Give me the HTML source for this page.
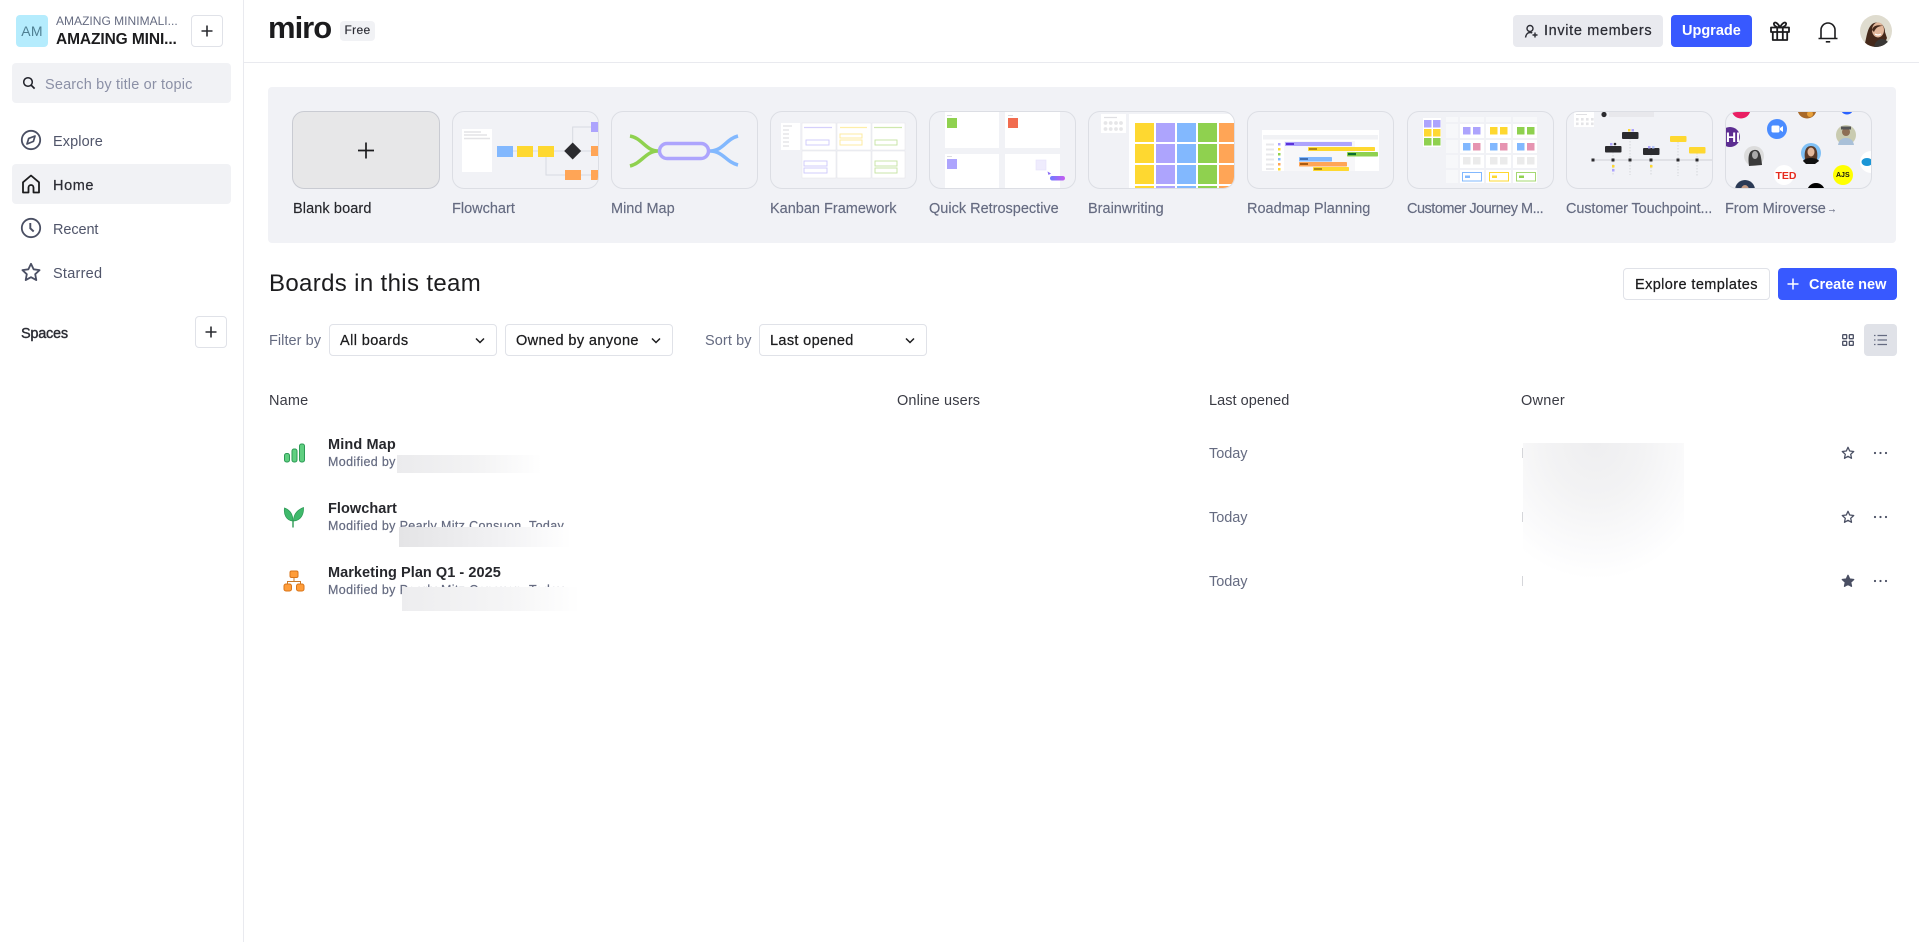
<!DOCTYPE html>
<html lang="en">
<head>
<meta charset="utf-8">
<title>Miro Boards</title>
<style>
*{box-sizing:border-box}
html,body{margin:0;padding:0;background:#fff}
body{width:1919px;height:942px;overflow:hidden;position:relative;font-family:"Liberation Sans",Arial,sans-serif;color:#1c1c1e;font-size:14.5px}
.a{position:absolute}
.t{position:absolute;white-space:nowrap;line-height:22px;height:20px}
.m{-webkit-text-stroke:.25px currentColor}
.g{color:#656b81}
.s{line-height:20px}
.btn{position:absolute;border:1px solid #e0e2e8;border-radius:4px;background:#fff}
.thumb{position:absolute;top:111px;width:147px;height:78px;border:1px solid #dcdee4;border-radius:12px;overflow:hidden;background:#f1f2f6}
.thumb svg{position:absolute;left:-1px;top:-1px;display:block}
.lab{position:absolute;top:198px;line-height:22px;white-space:nowrap;color:#656b81;font-size:14.5px;letter-spacing:0;-webkit-text-stroke:.15px currentColor}
svg{display:block}
</style>
</head>
<body>

<!-- Sidebar -->
<div class="a" style="left:243px;top:0;width:1px;height:942px;background:#e9eaef"></div>
<div class="a" style="left:16px;top:15px;width:32px;height:32px;border-radius:4px;background:#b5ecfd;color:#4f7f92;font-size:14px;line-height:33px;text-align:center;letter-spacing:.3px">AM</div>
<div class="t g s" style="left:56px;top:11px;font-size:12px;letter-spacing:.02px">AMAZING MINIMALI...</div>
<div class="t s" style="left:56px;top:30px;font-size:15.5px;font-weight:bold;letter-spacing:-.1px">AMAZING MINI...</div>
<div class="btn" style="left:191px;top:15px;width:32px;height:32px">
<svg width="30" height="30"><path d="M15 9.500v11M9.500 15h11" stroke="#2a2b30" stroke-width="1.600"/></svg></div>

<div class="a" style="left:12px;top:63px;width:219px;height:40px;background:#f1f2f5;border-radius:4px"></div>
<svg class="a" style="left:22px;top:76px" width="14" height="14" viewBox="0 0 14 14"><circle cx="6" cy="6" r="4.300" fill="none" stroke="#1f2028" stroke-width="1.500"/><path d="M9.200 9.200L12.600 12.600" stroke="#1f2028" stroke-width="1.700"/></svg>
<div class="t" style="left:45px;top:74px;color:#8b90a6;letter-spacing:.17px">Search by title or topic</div>

<svg class="a" style="left:20px;top:129px" width="22" height="22" viewBox="0 0 22 22"><circle cx="11" cy="11" r="9.200" fill="none" stroke="#4a4f63" stroke-width="1.800"/><path d="M15 7l-1.600 5.400L7 15l1.700-5.600z" fill="none" stroke="#4a4f63" stroke-width="1.700" stroke-linejoin="round"/></svg>
<div class="t g" style="left:53px;top:131px;color:#50556a;letter-spacing:.1px">Explore</div>

<div class="a" style="left:12px;top:164px;width:219px;height:40px;background:#f1f2f5;border-radius:4px"></div>
<svg class="a" style="left:20px;top:173px" width="22" height="22" viewBox="0 0 22 22"><path d="M3 19.500V9.300L11 2.500l8 6.800v10.200h-5.500v-5a2.500 2.500 0 0 0-5 0v5z" fill="none" stroke="#1c1c1e" stroke-width="1.800" stroke-linejoin="round"/></svg>
<div class="t m" style="left:53px;top:175px;letter-spacing:.6px;color:#2c2d35">Home</div>

<svg class="a" style="left:20px;top:217px" width="22" height="22" viewBox="0 0 22 22"><circle cx="11" cy="11" r="9.200" fill="none" stroke="#4a4f63" stroke-width="1.800"/><path d="M10.300 6v5.300l3.400 3.200" fill="none" stroke="#4a4f63" stroke-width="1.900"/></svg>
<div class="t" style="left:53px;top:219px;color:#50556a;letter-spacing:-.1px">Recent</div>

<svg class="a" style="left:20px;top:261px" width="22" height="22" viewBox="0 0 22 22"><path d="M11 2.800l2.600 5.500 6 .8-4.400 4.100 1.100 5.900L11 16.200l-5.300 2.900 1.100-5.900-4.400-4.100 6-.8z" fill="none" stroke="#4a4f63" stroke-width="1.800" stroke-linejoin="round"/></svg>
<div class="t" style="left:53px;top:263px;color:#50556a;letter-spacing:.25px">Starred</div>

<div class="t m" style="left:21px;top:323px;color:#2c2d35;letter-spacing:-.25px;-webkit-text-stroke:.4px currentColor">Spaces</div>
<div class="btn" style="left:195px;top:316px;width:32px;height:32px">
<svg width="30" height="30"><path d="M15 9.500v11M9.500 15h11" stroke="#2a2b30" stroke-width="1.600"/></svg></div>

<!-- Header -->
<div class="a" style="left:244px;top:62px;width:1675px;height:1px;background:#e9eaef"></div>
<div class="a" style="left:268px;top:9px;font-size:31px;line-height:38px;font-weight:bold;letter-spacing:-1px;color:#1c1c1e;height:38px;white-space:nowrap">miro</div>
<div class="a" style="left:340px;top:21px;width:35px;height:20px;background:#f1f2f5;border-radius:4px;font-size:12px;line-height:19px;text-align:center;letter-spacing:.35px;color:#2c2d35;-webkit-text-stroke:.15px currentColor">Free</div>

<div class="a" style="left:1513px;top:15px;width:150px;height:32px;background:#e9eaef;border-radius:4px"></div>
<svg class="a" style="left:1524px;top:24px" width="15" height="15" viewBox="0 0 15 15"><circle cx="6" cy="4.500" r="3" fill="none" stroke="#2c2d35" stroke-width="1.400"/><path d="M1.500 13.500c.4-3 2.200-5 4.700-5 .8 0 1.400.1 2 .5" fill="none" stroke="#2c2d35" stroke-width="1.400"/><path d="M11 8.500v5M8.500 11h5" stroke="#2c2d35" stroke-width="1.400"/></svg>
<div class="t m" style="left:1544px;top:20px;letter-spacing:.65px;color:#2c2d35">Invite members</div>
<div class="a" style="left:1671px;top:15px;width:81px;height:32px;background:#3859ff;border-radius:4px"></div>
<div class="t" style="left:1682px;top:20px;color:#fff;font-weight:bold;letter-spacing:0">Upgrade</div>

<svg class="a" style="left:1769px;top:20px" width="22" height="22" viewBox="0 0 22 22"><g fill="none" stroke="#1c1c1e" stroke-width="1.800" stroke-linejoin="round"><rect x="2" y="7.500" width="18" height="4.500"/><path d="M3.800 12v8h14.400v-8M8.200 7.500V20M13.800 7.500V20"/><path d="M11 7.500C9 3 5.800 1.500 5 3.200 4.300 5 7 7.500 11 7.500zM11 7.500C13 3 16.200 1.500 17 3.200 17.700 5 15 7.500 11 7.500z"/></g></svg>
<svg class="a" style="left:1817px;top:20px" width="22" height="24" viewBox="0 0 22 24"><path d="M1.500 18.500h19M4 18.500V10a7 7 0 0 1 14 0v8.500" fill="none" stroke="#1c1c1e" stroke-width="1.600"/><path d="M8.800 21.800h4.400" stroke="#1c1c1e" stroke-width="1.600"/></svg>
<svg class="a" style="left:1860px;top:15px" width="32" height="32" viewBox="0 0 32 32"><defs><clipPath id="av"><circle cx="16" cy="16" r="16"/></clipPath></defs><g clip-path="url(#av)"><rect width="32" height="32" fill="#dfdccf"/><path d="M4 32C7 22 7 11 14 8c7-2 11 3 11 9l2 6-4 9z" fill="#45291b"/><ellipse cx="18" cy="15" rx="6" ry="7.500" fill="#e2b79b"/><path d="M12 15c1-4 5-6 11-4-4 0-7 1-9 6z" fill="#45291b"/><path d="M15 19q3 2 6 0" stroke="#fff" stroke-width="1.200" fill="none"/><path d="M14 32c1-5 4-8 8-8s7 3 8 8z" fill="#3a3735"/></g></svg>

<!-- Templates panel -->
<div class="a" style="left:268px;top:87px;width:1628px;height:156px;background:#f1f2f6;border-radius:4px"></div>

<div class="a" style="left:292px;top:111px;width:148px;height:78px;background:#e7e7e8;border:1px solid #c9cbd2;border-radius:12px">
<svg width="146" height="76"><path d="M73 30.500v16M65 38.500h16" stroke="#1c1c1e" stroke-width="1.700"/></svg></div>
<div class="lab" style="left:293px;color:#26272c;letter-spacing:.1px">Blank board</div>

<!-- Flowchart -->
<div class="thumb" style="left:452px"><svg width="147" height="78">
<rect x="10" y="18" width="30" height="43" fill="#fff"/>
<path d="M12 21h17M12 24h23M12 27.500h26" stroke="#e3e3e6" stroke-width="1.600"/>
<path d="M61 40h78M94 46v18h19M129 64h10M120.700 32V16H139" stroke="#d8dae1" fill="none" stroke-width="1"/>
<rect x="45" y="35" width="16" height="11" fill="#82b8fe"/>
<rect x="65" y="35" width="16" height="11" fill="#fed830"/>
<rect x="86" y="35" width="16" height="11" fill="#fed830"/>
<path d="M120.700 31.500l8.500 8.500-8.500 8.500-8.500-8.500z" fill="#2b2b2f"/>
<rect x="139" y="11" width="10" height="10" fill="#ada4fd"/>
<rect x="139" y="35" width="10" height="10" fill="#ffa556"/>
<rect x="113" y="59" width="16" height="10" fill="#ffa556"/>
<rect x="139" y="59" width="10" height="10" fill="#ffa556"/>
</svg></div>
<div class="lab" style="left:452px">Flowchart</div>

<!-- Mind map -->
<div class="thumb" style="left:611px"><svg width="147" height="78">
<g fill="none" stroke-width="3.500">
<path d="M47 40C35 40 31 27 19 25M47 40C35 40 31 52 19 55" stroke="#8fd14f"/>
<path d="M99 40C112 40 115 28 127 25M99 40C112 40 115 51 127 54" stroke="#82b8fe"/>
<rect x="48.500" y="32.500" width="49" height="15" rx="7.500" stroke="#ada4fd"/>
</g></svg></div>
<div class="lab" style="left:611px">Mind Map</div>

<!-- Kanban -->
<div class="thumb" style="left:770px"><svg width="147" height="78">
<rect x="11" y="12" width="19" height="27" fill="#fff"/>
<path d="M13 15h9M13 19h6M13 23h6M13 27h6M13 31h6M13 35h6" stroke="#e6e6e9" stroke-width="1.500"/>
<g fill="#fff" stroke="#e6e7ec" stroke-width=".6">
<rect x="32" y="12" width="34" height="27"/><rect x="67" y="12" width="34" height="27"/><rect x="102" y="12" width="33" height="27"/>
<rect x="32" y="40" width="34" height="27"/><rect x="67" y="40" width="34" height="27"/><rect x="102" y="40" width="33" height="27"/></g>
<path d="M34 16.500h28" stroke="#d5d0fb" stroke-width="1.200"/><path d="M70 16.500h27" stroke="#fdeea8" stroke-width="1.200"/><path d="M104 16.500h28" stroke="#cfe8ae" stroke-width="1.200"/>
<g fill="none" stroke-width=".9">
<rect x="36" y="29" width="23" height="5" stroke="#cdc8fb"/>
<rect x="70" y="23" width="22" height="4" stroke="#fde99a"/><rect x="70" y="29" width="22" height="5" stroke="#fde99a"/>
<rect x="105" y="29" width="22" height="5" stroke="#c5e3a1"/>
<rect x="34" y="50" width="23" height="5" stroke="#cdc8fb"/><rect x="34" y="57" width="23" height="5" stroke="#cdc8fb"/>
<rect x="105" y="50" width="22" height="5" stroke="#c5e3a1"/><rect x="105" y="57" width="22" height="5" stroke="#c5e3a1"/>
</g></svg></div>
<div class="lab" style="left:770px">Kanban Framework</div>

<!-- Quick Retro -->
<div class="thumb" style="left:929px"><svg width="147" height="78">
<g fill="#fff"><rect x="16" y="0" width="54" height="37"/><rect x="76" y="0" width="55" height="37"/><rect x="16" y="43" width="54" height="36"/><rect x="76" y="43" width="55" height="36"/></g>
<rect x="18" y="7" width="10" height="10" fill="#8fd14f"/><rect x="79" y="7" width="10" height="10" fill="#f16c4f"/><rect x="18" y="48" width="10" height="10" fill="#ada4fd"/>
<path d="M18 4.500h5M79 4.500h5M18 45.500h5" stroke="#dcdce0" stroke-width="1"/>
<rect x="107" y="49" width="10" height="10" fill="#efecfd" stroke="#e4e0fb" stroke-width=".6"/>
<path d="M118.500 60.500l3.500 2-2.500 1.500z" fill="#8a6cf5"/>
<defs><linearGradient id="qg"><stop offset="0" stop-color="#6d7cff"/><stop offset="1" stop-color="#c65cf0"/></linearGradient></defs>
<rect x="121" y="65" width="15" height="4.500" rx="2.200" fill="url(#qg)"/>
</svg></div>
<div class="lab" style="left:929px">Quick Retrospective</div>

<!-- Brainwriting -->
<div class="thumb" style="left:1088px"><svg width="147" height="78">
<rect x="13" y="3" width="25" height="19" fill="#fff"/>
<path d="M16 6.500h13" stroke="#e0e0e3" stroke-width="1.200"/>
<g fill="#e6e6e8"><circle cx="17.500" cy="12" r="1.900"/><circle cx="22.700" cy="12" r="1.900"/><circle cx="28" cy="12" r="1.900"/><circle cx="33" cy="12" r="1.900"/><circle cx="17.500" cy="18" r="1.900"/><circle cx="22.700" cy="18" r="1.900"/><circle cx="28" cy="18" r="1.900"/><circle cx="33" cy="18" r="1.900"/></g>
<rect x="41" y="3" width="110" height="76" fill="#fff"/>
<g fill="#fed830"><rect x="47" y="12" width="19" height="19"/><rect x="47" y="33" width="19" height="19"/><rect x="47" y="54" width="19" height="19"/><rect x="47" y="75" width="19" height="6"/></g>
<g fill="#ada4fd"><rect x="68" y="12" width="19" height="19"/><rect x="68" y="33" width="19" height="19"/><rect x="68" y="54" width="19" height="19"/><rect x="68" y="75" width="19" height="6"/></g>
<g fill="#82b8fe"><rect x="89" y="12" width="19" height="19"/><rect x="89" y="33" width="19" height="19"/><rect x="89" y="54" width="19" height="19"/><rect x="89" y="75" width="19" height="6"/></g>
<g fill="#8fd14f"><rect x="110" y="12" width="19" height="19"/><rect x="110" y="33" width="19" height="19"/><rect x="110" y="54" width="19" height="19"/><rect x="110" y="75" width="19" height="6"/></g>
<g fill="#ffa556"><rect x="131" y="12" width="19" height="19"/><rect x="131" y="33" width="19" height="19"/><rect x="131" y="54" width="19" height="19"/><rect x="131" y="75" width="19" height="6"/></g>
</svg></div>
<div class="lab" style="left:1088px">Brainwriting</div>

<!-- Roadmap -->
<div class="thumb" style="left:1247px"><svg width="147" height="78">
<rect x="15" y="19" width="117" height="41" fill="#fff"/>
<rect x="16" y="24" width="115" height="4.500" fill="#f1f2f5"/>
<rect x="37" y="30" width="71" height="30" fill="#f7f7f9"/>
<g fill="#e8e8eb"><rect x="19" y="32.500" width="8" height="2"/><rect x="19" y="37.500" width="8" height="2"/><rect x="19" y="42.500" width="8" height="2"/><rect x="19" y="47.500" width="8" height="2"/><rect x="19" y="52.500" width="8" height="2"/><rect x="19" y="57" width="8" height="2"/></g>
<rect x="31" y="32" width="2.500" height="2.500" fill="#ada4fd"/><rect x="31" y="37" width="2.500" height="2.500" fill="#fed830"/><rect x="31" y="42" width="2.500" height="2.500" fill="#8fd14f"/><rect x="31" y="47" width="2.500" height="2.500" fill="#82b8fe"/><rect x="31" y="52" width="2.500" height="2.500" fill="#ffa556"/><rect x="31" y="57" width="2.500" height="2.500" fill="#fed830"/>
<rect x="38" y="31" width="67" height="4" rx=".8" fill="#ada4fd"/><rect x="39" y="32" width="8" height="2" fill="#5b30d8"/>
<rect x="61" y="36" width="67" height="4" rx=".8" fill="#fed830"/><rect x="62" y="37" width="8" height="2" fill="#b08a12"/>
<rect x="100" y="41" width="31" height="4.500" rx=".8" fill="#8fd14f"/><rect x="101" y="42" width="8" height="2.200" fill="#0b6f2c"/>
<rect x="52" y="46" width="33" height="4.500" rx=".8" fill="#82b8fe"/><rect x="53" y="47" width="8" height="2" fill="#3d6fb5"/>
<rect x="52" y="51" width="48" height="4.500" rx=".8" fill="#ffa556"/><rect x="53" y="52" width="8" height="2" fill="#a85a13"/>
<rect x="66" y="56" width="36" height="4" rx=".8" fill="#fed830"/><rect x="67" y="57" width="8" height="2" fill="#b08a12"/>
</svg></div>
<div class="lab" style="left:1247px">Roadmap Planning</div>

<!-- Customer Journey -->
<div class="thumb" style="left:1407px"><svg width="147" height="78">
<rect x="16" y="7" width="18" height="29" fill="#fff"/>
<g><rect x="17" y="9" width="7.500" height="7.500" fill="#ada4fd"/><rect x="26" y="9" width="7.500" height="7.500" fill="#ada4fd"/><rect x="17" y="18" width="7.500" height="7.500" fill="#fed830"/><rect x="26" y="18" width="7.500" height="7.500" fill="#fed830"/><rect x="17" y="27" width="7.500" height="7.500" fill="#8fd14f"/><rect x="26" y="27" width="7.500" height="7.500" fill="#8fd14f"/></g>
<g fill="#f7f8fa"><rect x="39" y="6" width="12" height="5"/><rect x="39" y="13" width="12" height="14"/><rect x="39" y="29" width="12" height="13"/><rect x="39" y="44" width="12" height="13"/><rect x="39" y="59" width="12" height="13"/><rect x="53" y="6" width="24" height="5"/><rect x="79" y="6" width="25" height="5"/><rect x="106" y="6" width="24" height="5"/></g>
<g fill="#fff"><rect x="53" y="13" width="24" height="14"/><rect x="79" y="13" width="25" height="14"/><rect x="106" y="13" width="24" height="14"/><rect x="53" y="29" width="24" height="13"/><rect x="79" y="29" width="25" height="13"/><rect x="106" y="29" width="24" height="13"/><rect x="53" y="44" width="24" height="13"/><rect x="79" y="44" width="25" height="13"/><rect x="106" y="44" width="24" height="13"/><rect x="53" y="59" width="24" height="13"/><rect x="79" y="59" width="25" height="13"/><rect x="106" y="59" width="24" height="13"/></g>
<rect x="56" y="16" width="7.500" height="7.500" fill="#ada4fd"/><rect x="66" y="16" width="7.500" height="7.500" fill="#ada4fd"/>
<rect x="83" y="16" width="7.500" height="7.500" fill="#fed830"/><rect x="93" y="16" width="7.500" height="7.500" fill="#fed830"/>
<rect x="110" y="16" width="7.500" height="7.500" fill="#8fd14f"/><rect x="120" y="16" width="7.500" height="7.500" fill="#8fd14f"/>
<rect x="56" y="32" width="7.500" height="7.500" fill="#82b8fe"/><rect x="66" y="32" width="7.500" height="7.500" fill="#e694b1"/>
<rect x="83" y="32" width="7.500" height="7.500" fill="#82b8fe"/><rect x="93" y="32" width="7.500" height="7.500" fill="#e694b1"/>
<rect x="110" y="32" width="7.500" height="7.500" fill="#82b8fe"/><rect x="120" y="32" width="7.500" height="7.500" fill="#e694b1"/>
<g fill="#ebebeb"><rect x="56" y="46" width="7.500" height="7.500"/><rect x="66" y="46" width="7.500" height="7.500"/><rect x="83" y="46" width="7.500" height="7.500"/><rect x="93" y="46" width="7.500" height="7.500"/><rect x="110" y="46" width="7.500" height="7.500"/><rect x="120" y="46" width="7.500" height="7.500"/></g>
<rect x="55.500" y="61.500" width="19" height="8.500" fill="none" stroke="#82b8fe"/><rect x="58" y="64.500" width="5" height="2.500" fill="#82b8fe"/>
<rect x="82.500" y="61.500" width="19" height="8.500" fill="none" stroke="#fed830"/><rect x="85" y="64.500" width="5" height="2.500" fill="#fed830"/>
<rect x="109.500" y="61.500" width="19" height="8.500" fill="none" stroke="#a5d872"/><rect x="112" y="64.500" width="5" height="2.500" fill="#8fd14f"/>
</svg></div>
<div class="lab" style="left:1407px;letter-spacing:-.5px">Customer Journey M...</div>

<!-- Touchpoint -->
<div class="thumb" style="left:1566px"><svg width="147" height="78">
<rect x="8" y="0" width="20" height="16" fill="#fff"/>
<path d="M10 3.500h11" stroke="#e0e0e3" stroke-width="1"/>
<g fill="#e4e4e7"><rect x="10" y="7" width="2.600" height="2.600"/><rect x="15" y="7" width="2.600" height="2.600"/><rect x="20" y="7" width="2.600" height="2.600"/><rect x="25" y="7" width="2.600" height="2.600"/><rect x="10" y="11.500" width="2.600" height="2.600"/><rect x="15" y="11.500" width="2.600" height="2.600"/><rect x="20" y="11.500" width="2.600" height="2.600"/><rect x="25" y="11.500" width="2.600" height="2.600"/></g>
<circle cx="38" cy="3.500" r="2.600" fill="#2b2b2f"/><rect x="43" y="1" width="45" height="5" fill="#e8e8ec"/>
<path d="M27 49h120" stroke="#cfd0d6" stroke-width="1"/>
<g stroke="#c8c9cf" stroke-width=".7" stroke-dasharray="1.500 1.500"><path d="M47 41v24M64 27v37M85 44v21M112 31v34M131 42v23"/></g>
<g fill="#2b2b2f"><rect x="25.500" y="47.500" width="3" height="3"/><rect x="45.500" y="47.500" width="3" height="3"/><rect x="62.500" y="47.500" width="3" height="3"/><rect x="83.500" y="47.500" width="3" height="3"/><rect x="110.500" y="47.500" width="3" height="3"/><rect x="129.500" y="47.500" width="3" height="3"/>
<rect x="39" y="35" width="16.500" height="6.500" rx="1"/><rect x="56" y="21" width="16.500" height="7" rx="1"/><rect x="77" y="37" width="16.500" height="7" rx="1"/><circle cx="49" cy="33" r="1.300"/></g>
<rect x="104" y="25" width="16.500" height="6" rx="1" fill="#fed830"/><rect x="123" y="36" width="16.500" height="6.500" rx="1" fill="#fed830"/>
<rect x="62" y="18" width="2.500" height="2.500" fill="#fed830"/><rect x="65.500" y="18" width="2.500" height="2.500" fill="#ada4fd"/>
<rect x="44" y="32" width="2.500" height="2.500" fill="#ada4fd"/>
<rect x="82" y="35" width="2.500" height="2.500" fill="#ada4fd"/><rect x="86" y="35" width="2.500" height="2.500" fill="#b8c8fd"/>
<rect x="46" y="54" width="2.500" height="2.500" fill="#fed830"/><rect x="46" y="58" width="2.500" height="2.500" fill="#ada4fd"/><rect x="84" y="54" width="2.500" height="2.500" fill="#fed830"/>
</svg></div>
<div class="lab" style="left:1566px;letter-spacing:-.12px">Customer Touchpoint...</div>

<!-- Miroverse -->
<div class="thumb" style="left:1725px"><svg width="147" height="78">
<circle cx="16" cy="-2" r="9.500" fill="#e91e63"/>
<circle cx="82" cy="-2" r="9.500" fill="#a8692a"/><circle cx="85" cy="3" r="3" fill="#e8a13a"/>
<circle cx="122" cy="-3" r="6.500" fill="#2962ff"/>
<circle cx="52" cy="18" r="10" fill="#4a8cff"/><rect x="46.500" y="14.500" width="8" height="7" rx="1.500" fill="#fff"/><path d="M55 17l3-2v6l-3-2z" fill="#fff"/>
<circle cx="5" cy="26" r="10" fill="#5c2d91"/><text x="1" y="31" font-size="14" font-weight="bold" fill="#fff" font-family="Liberation Sans, sans-serif">HI</text>
<circle cx="121" cy="24" r="10" fill="#c9cbb0"/><circle cx="121" cy="21" r="4" fill="#8d6f55"/><rect x="116" y="15.500" width="10" height="3" fill="#555"/><path d="M113 34c1-6 5-7 8-7s7 1 8 7z" fill="#a9c0d8"/>
<circle cx="29" cy="45" r="10" fill="#dcdcdc"/><path d="M24 55c-1-8-1-15 5-16s7 5 8 15z" fill="#3a3a3a"/><ellipse cx="30" cy="44" rx="3" ry="4" fill="#a9a9a9"/>
<circle cx="86" cy="42" r="10" fill="#7fc0f5"/><path d="M80 48c-1-6 0-13 6-13s7 7 6 13z" fill="#5a3a28"/><ellipse cx="86" cy="41" rx="3.500" ry="4.500" fill="#e3b79a"/><path d="M78 50c2-4 14-4 16 0l-4 3h-9z" fill="#111"/>
<circle cx="59" cy="64" r="10" fill="#fff"/><text x="50.500" y="68" font-size="10.500" font-weight="bold" fill="#e62b1e" font-family="Liberation Sans, sans-serif">TED</text>
<circle cx="118" cy="64" r="10" fill="#ffff00"/><text x="111" y="66" font-size="7" font-weight="bold" fill="#111" font-family="Liberation Sans, sans-serif">AJS</text>
<circle cx="146" cy="51" r="11" fill="#fff"/><ellipse cx="142" cy="51" rx="5.500" ry="4" fill="#1b96d6"/>
<circle cx="20" cy="79" r="10" fill="#2b3a55"/><ellipse cx="20" cy="79" rx="4" ry="5" fill="#c49a82"/>
<circle cx="91" cy="81" r="9" fill="#000"/>
</svg></div>
<div class="lab" style="left:1725px;letter-spacing:-.05px">From Miroverse</div>
<div class="lab" style="left:1827px;transform:scaleX(.68);transform-origin:0 50%;font-size:14.5px;-webkit-text-stroke:0">→</div>

<!-- Boards heading -->
<div class="a" style="left:269px;top:268px;font-size:24px;line-height:32px;letter-spacing:.35px;color:#1c1c1e;white-space:nowrap">Boards in this team</div>
<div class="btn" style="left:1623px;top:268px;width:147px;height:32px"></div>
<div class="t m" style="left:1635px;top:274px;letter-spacing:.4px">Explore templates</div>
<div class="a" style="left:1778px;top:268px;width:119px;height:32px;background:#3859ff;border-radius:4px"></div>
<svg class="a" style="left:1787px;top:278px" width="12" height="12"><path d="M6 .5v11M.5 6h11" stroke="#fff" stroke-width="1.500"/></svg>
<div class="t" style="left:1809px;top:274px;color:#fff;font-weight:bold;letter-spacing:0">Create new</div>

<!-- Filters -->
<div class="t g" style="left:269px;top:330px;letter-spacing:.05px">Filter by</div>
<div class="btn" style="left:329px;top:324px;width:168px;height:32px"></div>
<div class="t m" style="left:340px;top:330px;letter-spacing:.4px">All boards</div>
<svg class="a" style="left:475px;top:337px" width="10" height="8"><path d="M1 1.500l4 4 4-4" fill="none" stroke="#1c1c1e" stroke-width="1.500"/></svg>
<div class="btn" style="left:505px;top:324px;width:168px;height:32px"></div>
<div class="t m" style="left:516px;top:330px;letter-spacing:.4px">Owned by anyone</div>
<svg class="a" style="left:651px;top:337px" width="10" height="8"><path d="M1 1.500l4 4 4-4" fill="none" stroke="#1c1c1e" stroke-width="1.500"/></svg>
<div class="t g" style="left:705px;top:330px;letter-spacing:.1px">Sort by</div>
<div class="btn" style="left:759px;top:324px;width:168px;height:32px"></div>
<div class="t m" style="left:770px;top:330px;letter-spacing:.35px">Last opened</div>
<svg class="a" style="left:905px;top:337px" width="10" height="8"><path d="M1 1.500l4 4 4-4" fill="none" stroke="#1c1c1e" stroke-width="1.500"/></svg>

<svg class="a" style="left:1842px;top:334px" width="12" height="12"><g fill="none" stroke="#4a4f63" stroke-width="1.300"><rect x=".7" y=".7" width="4" height="4" rx=".6"/><rect x="7.300" y=".7" width="4" height="4" rx=".6"/><rect x=".7" y="7.300" width="4" height="4" rx=".6"/><rect x="7.300" y="7.300" width="4" height="4" rx=".6"/></g></svg>
<div class="a" style="left:1864px;top:324px;width:33px;height:32px;background:#e0e2e8;border-radius:4px"></div>
<svg class="a" style="left:1874px;top:334px" width="13" height="12"><g stroke="#656b81" stroke-width="1.300"><path d="M3.500 1.500H13M3.500 6H13M3.500 10.500H13"/><path d="M0 1.500h1.500M0 6h1.500M0 10.500h1.500"/></g></svg>

<!-- Table head -->
<div class="t" style="left:269px;top:390px;color:#3a3b44;letter-spacing:.15px">Name</div>
<div class="t" style="left:897px;top:390px;color:#3a3b44;letter-spacing:.15px">Online users</div>
<div class="t" style="left:1209px;top:390px;color:#3a3b44;letter-spacing:.05px">Last opened</div>
<div class="t" style="left:1521px;top:390px;color:#3a3b44;letter-spacing:.25px">Owner</div>

<!-- Row 1 -->
<svg class="a" style="left:283px;top:443px" width="23" height="20"><g fill="#5fcf80" stroke="#2d9a56" stroke-width="1"><rect x="1.500" y="10.500" width="5" height="8.500" rx="2"/><rect x="9" y="6" width="5" height="13" rx="2"/><rect x="16.500" y="1" width="5" height="18" rx="2"/></g></svg>
<div class="t" style="left:328px;top:434px;font-weight:bold;letter-spacing:.12px;color:#26272c">Mind Map</div>
<div class="t g s" style="left:328px;top:452px;font-size:12.500px;letter-spacing:.35px;-webkit-text-stroke:.2px currentColor">Modified by</div>
<div class="t" style="left:1209px;top:443px;color:#656b81;letter-spacing:-.05px">Today</div>

<!-- Row 2 -->
<svg class="a" style="left:283px;top:506px" width="22" height="22" viewBox="0 0 22 22"><path d="M10 15C10 8 7 4 1.500 2 .5 8 3 14.500 10 15z" fill="#3fb96b" stroke="#2d9a56" stroke-width=".7"/><path d="M10.500 15C10.500 8 14 4 20.500 1.500 21 8 18 14.500 10.500 15z" fill="#3fb96b" stroke="#2d9a56" stroke-width=".7"/><path d="M10 14v7.500" stroke="#2d9a56" stroke-width="1.400"/></svg>
<div class="t" style="left:328px;top:498px;font-weight:bold;letter-spacing:.05px;color:#26272c">Flowchart</div>
<div class="t g s" style="left:328px;top:516px;font-size:12.500px;letter-spacing:.35px;-webkit-text-stroke:.2px currentColor">Modified by Pearly Mitz Consuon, Today</div>
<div class="t" style="left:1209px;top:507px;color:#656b81;letter-spacing:-.05px">Today</div>

<!-- Row 3 -->
<svg class="a" style="left:283px;top:570px" width="22" height="22" viewBox="0 0 22 22"><path d="M11 7v4.500M4.500 14.500v-3h13v3" fill="none" stroke="#c77a2a" stroke-width="1"/><g fill="#ff9d3a" stroke="#d9751a" stroke-width="1"><rect x="7" y="1" width="8" height="6.500" rx="1.500"/><rect x="1" y="14" width="7.500" height="7" rx="2"/><rect x="13.500" y="14" width="7.500" height="7" rx="2"/></g></svg>
<div class="t" style="left:328px;top:562px;font-weight:bold;letter-spacing:.05px;color:#26272c">Marketing Plan Q1 - 2025</div>
<div class="t g s" style="left:328px;top:580px;font-size:12.500px;letter-spacing:.35px;-webkit-text-stroke:.2px currentColor">Modified by Pearly Mitz Consuon, Today</div>
<div class="t" style="left:1209px;top:571px;color:#656b81;letter-spacing:-.05px">Today</div>

<!-- Redactions -->
<div class="a" style="left:397px;top:455px;width:145px;height:18px;background:linear-gradient(90deg,#ebebed 0%,#f3f3f4 55%,#fff 100%)"></div>
<div class="a" style="left:399px;top:527px;width:172px;height:20px;background:linear-gradient(90deg,#e4e4e6 0%,#f2f2f4 60%,#fff 100%)"></div>
<div class="a" style="left:402px;top:587px;width:178px;height:24px;background:linear-gradient(90deg,#ededef 0%,#f5f5f6 60%,#fff 100%)"></div>

<div class="a" style="left:1522px;top:448px;width:1px;height:10px;background:#d5d6da"></div>
<div class="a" style="left:1522px;top:512px;width:1px;height:10px;background:#d5d6da"></div>
<div class="a" style="left:1522px;top:576px;width:1px;height:10px;background:#d5d6da"></div>
<div class="a" style="left:1523px;top:443px;width:161px;height:152px;background:radial-gradient(ellipse 75% 90% at 45% 0%,#eeeef0 0%,#f3f3f4 40%,#fafafb 75%,#fff 100%)"></div>

<!-- Row actions -->
<svg class="a" style="left:1841px;top:446px" width="14" height="14" viewBox="0 0 14 14"><path d="M7 1.300l1.700 3.700 4 .5-3 2.800.8 4L7 10.300l-3.500 2 .8-4-3-2.800 4-.5z" fill="none" stroke="#4a4f63" stroke-width="1.300" stroke-linejoin="round"/></svg>
<svg class="a" style="left:1841px;top:510px" width="14" height="14" viewBox="0 0 14 14"><path d="M7 1.300l1.700 3.700 4 .5-3 2.800.8 4L7 10.300l-3.500 2 .8-4-3-2.800 4-.5z" fill="none" stroke="#4a4f63" stroke-width="1.300" stroke-linejoin="round"/></svg>
<svg class="a" style="left:1841px;top:574px" width="14" height="14" viewBox="0 0 14 14"><path d="M7 1.300l1.700 3.700 4 .5-3 2.800.8 4L7 10.300l-3.500 2 .8-4-3-2.800 4-.5z" fill="#4a4f63" stroke="#4a4f63" stroke-width="1.300" stroke-linejoin="round"/></svg>
<svg class="a" style="left:1873px;top:451px" width="15" height="4"><g fill="#4a4f63"><circle cx="2" cy="2" r="1.100"/><circle cx="7.500" cy="2" r="1.100"/><circle cx="13" cy="2" r="1.100"/></g></svg>
<svg class="a" style="left:1873px;top:515px" width="15" height="4"><g fill="#4a4f63"><circle cx="2" cy="2" r="1.100"/><circle cx="7.500" cy="2" r="1.100"/><circle cx="13" cy="2" r="1.100"/></g></svg>
<svg class="a" style="left:1873px;top:579px" width="15" height="4"><g fill="#4a4f63"><circle cx="2" cy="2" r="1.100"/><circle cx="7.500" cy="2" r="1.100"/><circle cx="13" cy="2" r="1.100"/></g></svg>

</body>
</html>
